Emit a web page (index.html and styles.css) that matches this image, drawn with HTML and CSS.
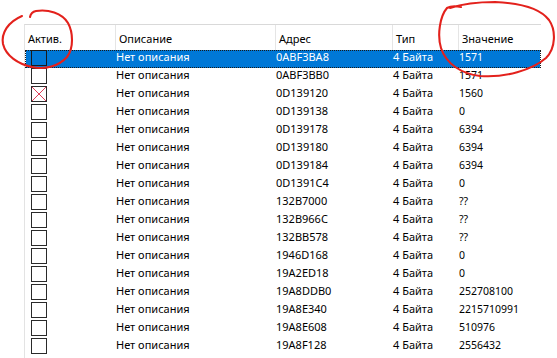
FILE: index.html
```html
<!DOCTYPE html>
<html lang="ru">
<head>
<meta charset="utf-8">
<title>Список адресов</title>
<link rel="stylesheet" href="styles.css">
</head>
<body>
<div class="page">
  <div class="list">
    <div class="header">
      <div class="hcell">Актив.</div>
      <div class="hcell">Описание</div>
      <div class="hcell">Адрес</div>
      <div class="hcell">Тип</div>
      <div class="hcell">Значение</div>
    </div>
    <div class="rows">
      <div class="row sel"><div class="c1"><span class="cb"></span></div><div>Нет описания</div><div>0ABF3BA8</div><div>4 Байта</div><div class="val">1571</div></div>
      <div class="row"><div class="c1"><span class="cb"></span></div><div>Нет описания</div><div>0ABF3BB0</div><div>4 Байта</div><div class="val">1571</div></div>
      <div class="row"><div class="c1"><span class="cb x"></span></div><div>Нет описания</div><div>0D139120</div><div>4 Байта</div><div class="val">1560</div></div>
      <div class="row"><div class="c1"><span class="cb"></span></div><div>Нет описания</div><div>0D139138</div><div>4 Байта</div><div class="val">0</div></div>
      <div class="row"><div class="c1"><span class="cb"></span></div><div>Нет описания</div><div>0D139178</div><div>4 Байта</div><div class="val">6394</div></div>
      <div class="row"><div class="c1"><span class="cb"></span></div><div>Нет описания</div><div>0D139180</div><div>4 Байта</div><div class="val">6394</div></div>
      <div class="row"><div class="c1"><span class="cb"></span></div><div>Нет описания</div><div>0D139184</div><div>4 Байта</div><div class="val">6394</div></div>
      <div class="row"><div class="c1"><span class="cb"></span></div><div>Нет описания</div><div>0D1391C4</div><div>4 Байта</div><div class="val">0</div></div>
      <div class="row"><div class="c1"><span class="cb"></span></div><div>Нет описания</div><div>132B7000</div><div>4 Байта</div><div class="val">??</div></div>
      <div class="row"><div class="c1"><span class="cb"></span></div><div>Нет описания</div><div>132B966C</div><div>4 Байта</div><div class="val">??</div></div>
      <div class="row"><div class="c1"><span class="cb"></span></div><div>Нет описания</div><div>132BB578</div><div>4 Байта</div><div class="val">??</div></div>
      <div class="row"><div class="c1"><span class="cb"></span></div><div>Нет описания</div><div>1946D168</div><div>4 Байта</div><div class="val">0</div></div>
      <div class="row"><div class="c1"><span class="cb"></span></div><div>Нет описания</div><div>19A2ED18</div><div>4 Байта</div><div class="val">0</div></div>
      <div class="row"><div class="c1"><span class="cb"></span></div><div>Нет описания</div><div>19A8DDB0</div><div>4 Байта</div><div class="val">252708100</div></div>
      <div class="row"><div class="c1"><span class="cb"></span></div><div>Нет описания</div><div>19A8E340</div><div>4 Байта</div><div class="val">2215710991</div></div>
      <div class="row"><div class="c1"><span class="cb"></span></div><div>Нет описания</div><div>19A8E608</div><div>4 Байта</div><div class="val">510976</div></div>
      <div class="row"><div class="c1"><span class="cb"></span></div><div>Нет описания</div><div>19A8F128</div><div>4 Байта</div><div class="val">2556432</div></div>
    </div>
  </div>
  <svg class="marks" width="557" height="358" viewBox="0 0 557 358" aria-hidden="true">
    <path d="M30 17 Q31 12 36 11 C48 9 62 13 68 23 C73 32 74 48 67 57 C59 66 45 70 32 67 C18 64 6 56 3 44 C1 33 8 22 22 16"/>
    <path d="M461 7 Q452 5 447 8 C440 16 437 35 441 48 C446 64 462 74 480 76 C505 78 532 70 546 58 C556 48 556 30 549 20 C540 8 520 3 495 2 C478 2 462 4 450 8"/>
  </svg>
</div>
</body>
</html>
```
FILE: styles.css
```css
html, body {
  margin: 0;
  padding: 0;
  background: #ffffff;
}

.page {
  position: relative;
  width: 557px;
  height: 358px;
  overflow: hidden;
  font-family: "Noto Sans", "Open Sans", sans-serif;
  font-size: 11px;
  color: #000000;
}

.list {
  margin: 24px 0 0 24px;
  width: 517px;
  height: 334px;
  border-top: 1px solid #d9d9d9;
  border-left: 1px solid #e3e3e3;
  box-sizing: border-box;
}

.header {
  display: grid;
  grid-template-columns: 91px 160px 117px 66px 82px;
  height: 25px;
}

.hcell {
  border-right: 1px solid #e5e5e5;
  padding: 7px 0 0 3px;
  line-height: 14px;
  white-space: nowrap;
}

.hcell:last-child {
  border-right: none;
}

.row {
  display: grid;
  grid-template-columns: 90px 160px 117px 66px 81px;
  height: 18px;
  line-height: 14px;
  border-left: 1px solid transparent;
  border-right: 1px solid transparent;
  white-space: nowrap;
}

.val {
  font-size: 10.5px;
}

.row.sel {
  background: #0078d7;
  background-clip: padding-box;
  color: #ffffff;
  outline: 1px dotted #1a1a1a;
  outline-offset: -1px;
}

.c1 {
  padding-left: 5px;
}

.cb {
  display: block;
  width: 14px;
  height: 14px;
  border: 1px solid #2a2a2a;
}

.row.sel .cb {
  border-color: #1a1a1a;
}

.cb.x {
  background:
    linear-gradient(45deg, transparent calc(50% - 0.7px), #e0405a 50%, transparent calc(50% + 0.7px)),
    linear-gradient(-45deg, transparent calc(50% - 0.7px), #e0405a 50%, transparent calc(50% + 0.7px));
}

.marks {
  position: absolute;
  left: 0;
  top: 0;
  pointer-events: none;
}

.marks path {
  fill: none;
  stroke: #e3211c;
  stroke-width: 2.1;
  stroke-linecap: round;
  stroke-linejoin: round;
}
```
